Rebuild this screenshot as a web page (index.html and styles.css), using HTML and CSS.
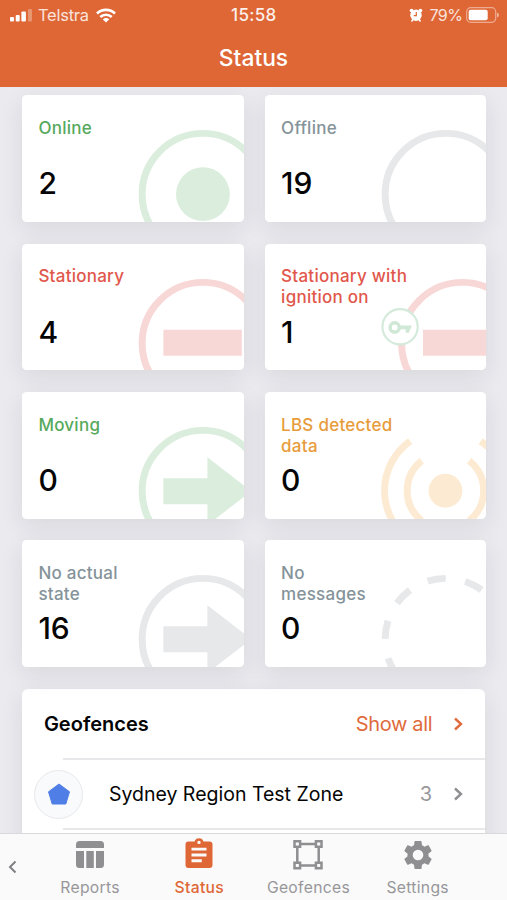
FILE: index.html
```html
<!DOCTYPE html>
<html lang="en">
<head>
<meta charset="utf-8">
<title>Status</title>
<link rel="stylesheet" href="styles.css">
</head>
<body>
<div class="app">
  <header class="header">
    <div class="statusbar">
      <div class="sb-left">
        <svg class="signal" viewBox="0 0 23 13" width="23" height="13"><rect x="0" y="8" width="4" height="4.500" rx="1"/><rect x="5.700" y="6" width="4" height="6.500" rx="1"/><rect x="11.400" y="2.500" width="4.500" height="10" rx="1"/><rect x="18" y="0" width="4" height="12.500" rx="1" opacity=".3"/></svg>
        <span class="carrier">Telstra</span>
        <svg class="wifi" viewBox="0 0 20 15" width="20" height="15"><g fill="none" stroke="#fff" stroke-width="2.700"><path d="M1 5.500a13 13 0 0 1 18 0"/><path d="M4.300 9a8.300 8.300 0 0 1 11.400 0"/></g><path d="M10 14.500 6.700 11.300a4.800 4.800 0 0 1 6.600 0z"/></svg>
      </div>
      <span class="clock">15:58</span>
      <div class="sb-right">
        <svg viewBox="0 0 14 14" width="14" height="14"><circle cx="7" cy="7.300" r="5.700"/><circle cx="2.600" cy="2.600" r="1.900"/><circle cx="11.400" cy="2.600" r="1.900"/><path d="M2.500 13.500 4 11.500M11.500 13.500 10 11.500" stroke="#fff" stroke-width="1.500"/><path d="M7.300 4v3.700H4.700" fill="none" stroke="#df6736" stroke-width="1.200"/></svg>
        <span class="percent">79%</span>
        <svg class="battery" viewBox="0 0 33 16" width="33" height="16"><rect x=".7" y=".7" width="29" height="14.600" rx="4" fill="none" stroke="#fff" stroke-opacity=".45" stroke-width="1.200"/><rect x="2.700" y="2.700" width="19" height="10.600" rx="2"/><path d="M31 5.500v5q2-.7 2-2.500t-2-2.500" opacity=".5"/></svg>
      </div>
    </div>
    <h1 class="title">Status</h1>
  </header>

  <main class="content">
    <section class="grid">
      <article class="card green">
        <svg class="art" viewBox="0 0 221 127"><circle class="ring" cx="181" cy="99.500" r="61"/><circle class="fill" cx="181" cy="99.500" r="27"/></svg>
        <h2 class="label">Online</h2><p class="count">2</p>
      </article>
      <article class="card gray">
        <svg class="art" viewBox="0 0 221 127"><circle class="ring" cx="181" cy="99.500" r="61"/></svg>
        <h2 class="label">Offline</h2><p class="count">19</p>
      </article>
      <article class="card red">
        <svg class="art" viewBox="0 0 221 127"><circle class="ring" cx="181" cy="99.500" r="61"/><path class="fill" d="M141.300 86h78.700v26h-78.700z"/></svg>
        <h2 class="label">Stationary</h2><p class="count">4</p>
      </article>
      <article class="card red">
        <svg class="art" viewBox="0 0 221 127"><circle class="ring" cx="197.500" cy="99.500" r="61"/><path class="fill" d="M158 86h64v26h-64z"/><circle class="badge" cx="135" cy="83" r="17.700"/><circle class="key-ring" cx="129.600" cy="83.700" r="4.600"/><path class="key" d="M133.500 81.800h13.300l-3 7.200h-3.300v-3.400h-7z"/></svg>
        <h2 class="label">Stationary with<br>ignition on</h2><p class="count">1</p>
      </article>
      <article class="card green">
        <svg class="art" viewBox="0 0 221 127"><circle class="ring" cx="181" cy="99.500" r="61"/><path class="fill" d="M141.300 86.500h44.200v-21l44 34-44 34v-21h-44.200z"/></svg>
        <h2 class="label">Moving</h2><p class="count">0</p>
      </article>
      <article class="card orange">
        <svg class="art" viewBox="0 0 221 127"><circle class="fill" cx="180.500" cy="99" r="17"/><path class="ring" d="M156.700 68.900a38.400 38.400 0 0 0 0 60.200M204.300 68.900a38.400 38.400 0 0 1 0 60.200M145.200 49.200a61 61 0 0 0 0 99.600M215.800 49.200a61 61 0 0 1 0 99.600"/></svg>
        <h2 class="label">LBS detected<br>data</h2><p class="count">0</p>
      </article>
      <article class="card gray">
        <svg class="art" viewBox="0 0 221 127"><circle class="ring" cx="181" cy="99.500" r="61"/><path class="fill" d="M141.300 86.500h44.200v-21l44 34-44 34v-21h-44.200z"/></svg>
        <h2 class="label">No actual<br>state</h2><p class="count">16</p>
      </article>
      <article class="card gray">
        <svg class="art" viewBox="0 0 221 127"><circle class="ring dashed" cx="181" cy="99.500" r="61"/></svg>
        <h2 class="label">No<br>messages</h2><p class="count">0</p>
      </article>
    </section>

    <section class="panel">
      <div class="panel-head">
        <h2 class="panel-title">Geofences</h2>
        <a class="show-all">Show all</a>
        <svg class="chevron accent" viewBox="0 0 10 14" width="10" height="14"><path d="M2 1.500 8 7l-6 5.500"/></svg>
      </div>
      <div class="zone">
        <span class="zone-icon"><svg viewBox="0 0 24 22" width="24" height="22"><path d="M12 1 22.500 8.800 18.800 21H5.200L1.500 8.800z" fill="#4f7fe6" stroke="#4f7fe6" stroke-linejoin="round"/></svg></span>
        <span class="zone-name">Sydney Region Test Zone</span>
        <span class="zone-count">3</span>
        <svg class="chevron" viewBox="0 0 10 14" width="10" height="14"><path d="M2 1.500 8 7l-6 5.500"/></svg>
      </div>
      <div class="zone"></div>
    </section>
  </main>

  <nav class="tabs">
    <svg class="back" viewBox="0 0 10 14" width="10" height="14"><path d="M7.500 1.500 2 7l5.500 5.500"/></svg>
    <a class="tab">
      <svg viewBox="0 0 30 30" width="30" height="30"><path d="M1 8V4.500Q1 1 4.500 1h21Q29 1 29 4.500V8zM1 11h8v17H4.500Q1 28 1 24.500zM11.300 11h7.500v17h-7.500zM21 11h8v13.500Q29 28 25.500 28H21z"/></svg>
      <span>Reports</span>
    </a>
    <a class="tab active">
      <svg viewBox="0 0 30 30" width="30" height="30"><path fill-rule="evenodd" d="M4.500 1.500h6a4.700 4.700 0 0 1 9 0h6q3 0 3 3V25q0 3-3 3h-21q-3 0-3-3V4.500q0-3 3-3zM15 .7a1.700 1.700 0 1 0 0 3.400 1.700 1.700 0 0 0 0-3.400zM7.500 7.700v2.900h15V7.700zm0 5.800v2.900h15v-2.900zm0 5.800v2.900h10.300v-2.900z"/></svg>
      <span>Status</span>
    </a>
    <a class="tab">
      <svg viewBox="0 0 30 30" width="30" height="30"><g fill="none" stroke="#8f8f92" stroke-width="2.500"><path d="M8 4h14M8 25.500h14M4.300 7.500V22M25.700 7.500V22"/><path d="M1.500 1.200h5.600v5.600H1.500zM22.900 1.200h5.600v5.600h-5.600zM1.500 22.700h5.600v5.600H1.500zM22.900 22.700h5.600v5.600h-5.600z"/></g></svg>
      <span>Geofences</span>
    </a>
    <a class="tab">
      <svg viewBox="2 2 20 20" width="28" height="28"><path d="M19.430 12.980c.04-.32.070-.64.070-.98s-.03-.66-.07-.98l2.110-1.650c.19-.15.240-.42.120-.64l-2-3.460c-.12-.22-.39-.3-.61-.22l-2.490 1c-.52-.4-1.080-.73-1.690-.98l-.38-2.650C14.460 2.180 14.250 2 14 2h-4c-.25 0-.46.180-.49.420l-.38 2.650c-.61.250-1.170.59-1.690.98l-2.490-1c-.23-.09-.49 0-.61.220l-2 3.460c-.13.220-.07.490.12.640l2.110 1.650c-.04.320-.07.650-.07.980s.03.660.07.980l-2.110 1.650c-.19.150-.24.420-.12.640l2 3.460c.12.220.39.300.61.220l2.490-1c.52.400 1.080.730 1.690.980l.38 2.650c.03.240.24.420.49.420h4c.25 0 .46-.18.490-.42l.38-2.650c.61-.25 1.170-.59 1.690-.98l2.490 1c.23.090.49 0 .61-.22l2-3.460c.12-.22.070-.49-.12-.64l-2.110-1.650zM12 15.800a3.800 3.800 0 1 1 0-7.600 3.800 3.800 0 0 1 0 7.600z"/></svg>
      <span>Settings</span>
    </a>
  </nav>
</div>
</body>
</html>
```

FILE: styles.css
```css
* { box-sizing: border-box; }
body, h1, h2, p { margin: 0; }
body { font-family: Inter, "Liberation Sans", sans-serif; color: #050505; }

.app {
  width: 507px;
  height: 900px;
  display: flex;
  flex-direction: column;
  overflow: hidden;
  background: #eaeaef;
}

.header {
  flex: none;
  height: 87px;
  background: #df6736;
  color: #fff;
  fill: #fff;
}
.statusbar {
  height: 30px;
  padding: 0 8.500px 0 10px;
  display: grid;
  grid-template-columns: 1fr auto 1fr;
  align-items: center;
  font-size: 16.500px;
}
.sb-left, .sb-right { display: flex; align-items: center; }
.sb-right { justify-content: flex-end; }
.signal { margin-right: 5px; }
.carrier { letter-spacing: -.25px; opacity: .82; }
.wifi { margin-left: 7px; }
.clock { font-weight: 500; font-size: 17px; letter-spacing: .3px; margin-right: 1px; opacity: .9; }
.percent { margin: 0 3px 0 6px; font-size: 16px; letter-spacing: -.5px; opacity: .82; }
.title {
  font-size: 22.800px;
  line-height: 28px;
  margin-top: 14px;
  font-weight: 500;
  text-align: center;
}

.content {
  flex: 1;
  min-height: 0;
  overflow: hidden;
  padding: 8.300px 20.600px 0 22.400px;
}
.grid {
  display: grid;
  grid-template-columns: 1fr 1fr;
  grid-auto-rows: 126.600px;
  gap: 21.800px 21.400px;
}
.card {
  position: relative;
  padding: 22.500px 16px 0;
  background: #fff;
  border-radius: 4.500px;
  box-shadow: 0 7px 24px rgba(30, 30, 45, .09);
}
.art { position: absolute; inset: 0; width: 100%; height: 100%; border-radius: 4.500px; }
.ring { fill: none; stroke: var(--tint); stroke-width: 7; }
.dashed { stroke-dasharray: 18.500 19.830; }
.fill { fill: var(--tint); }
.badge { fill: #fff; stroke: #d4eadb; stroke-width: 2.200; }
.key-ring { fill: none; stroke: #d0e8d6; stroke-width: 3.500; }
.key { fill: #d0e8d6; }
.label {
  position: relative;
  height: 42px;
  color: var(--ink);
  font-size: 17px;
  font-weight: 500;
  line-height: 21px;
  letter-spacing: .25px;
}
.count {
  position: relative;
  margin-top: 3.500px;
  font-size: 30px;
  line-height: 40px;
  font-weight: 500;
}
.green { --ink: #56a95d; --tint: #dbeedd; }
.gray { --ink: #85939a; --tint: #e6e8ea; }
.red { --ink: #e1574c; --tint: #f8d8d7; }
.orange { --ink: #e79c3c; --tint: #fcebd2; }

.panel {
  margin: 21.800px 1.200px 0 0;
  background: #fff;
  border-radius: 6px 6px 0 0;
  box-shadow: 0 7px 24px rgba(30, 30, 45, .09);
}
.panel-head, .zone { display: flex; align-items: center; padding-right: 22px; }
.panel-head { height: 69px; padding-left: 21.500px; padding-top: 1px; }
.panel-title { font-size: 20px; font-weight: 600; letter-spacing: 0; flex: 1; }
.show-all { font-size: 20px; color: #e06b3c; letter-spacing: -.35px; }
.chevron { margin-left: 21px; fill: none; stroke: #8e8e90; stroke-width: 2.400; }
.accent { stroke: #e06b3c; }
.zone {
  height: 70.500px;
  padding: 2px 22px 0 12px;
  background: linear-gradient(#e8e8eb, #e8e8eb) 40.500px 0 / 100% 2px no-repeat;
}
.zone-icon {
  width: 49px;
  height: 49px;
  border: 1.500px solid #e7e8ec;
  border-radius: 50%;
  background: #f9fafc;
  display: grid;
  place-items: center;
}
.zone-name { flex: 1; margin-left: 25.500px; font-size: 19.500px; letter-spacing: 0; }
.zone-count { font-size: 20px; color: #98989b; }

.tabs {
  flex: none;
  height: 67px;
  display: flex;
  border-top: 1.500px solid #d9d9dc;
  background: #fafafa;
  color: #97979a;
  fill: #8f8f92;
}
.back { width: 10px; margin: 26px 17.500px 0 8px; fill: none; stroke: #808083; stroke-width: 2; }
.tab {
  width: 109.200px;
  display: flex;
  flex-direction: column;
  align-items: center;
  padding-top: 6px;
  font-size: 15.700px;
  letter-spacing: .3px;
}
.tab svg { height: 30px; overflow: visible; }
.tab span { line-height: 20px; margin-top: 8px; }
.active { color: #df6736; fill: #df6736; }
.active span { font-weight: 500; }
```
